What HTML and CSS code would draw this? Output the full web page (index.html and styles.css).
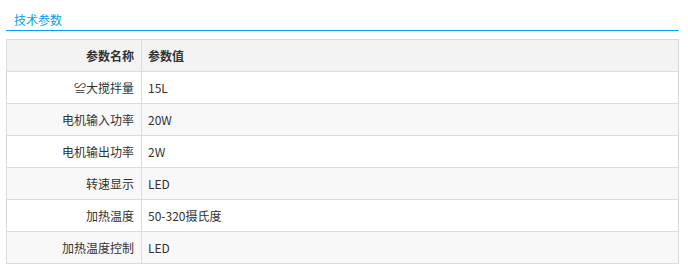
FILE: index.html
```html
<!DOCTYPE html>
<html lang="zh-CN">
<head>
<meta charset="utf-8">
<title>技术参数</title>
<link rel="stylesheet" href="styles.css">
</head>
<body>
<div class="panel">
  <div class="tab-bar"><span class="tab">技术参数</span></div>
  <table class="params">
    <tr class="head"><th class="label">参数名称</th><th class="value">参数值</th></tr>
    <tr><td class="label">≌大搅拌量</td><td class="value">15L</td></tr>
    <tr class="alt"><td class="label">电机输入功率</td><td class="value">20W</td></tr>
    <tr><td class="label">电机输出功率</td><td class="value">2W</td></tr>
    <tr class="alt"><td class="label">转速显示</td><td class="value">LED</td></tr>
    <tr><td class="label">加热温度</td><td class="value">50-320摄氏度</td></tr>
    <tr class="alt"><td class="label">加热温度控制</td><td class="value">LED</td></tr>
  </table>
</div>
</body>
</html>
```
FILE: styles.css
```css
html, body {
  margin: 0;
  padding: 0;
  background: #fff;
}
body {
  font-family: "Noto Sans CJK SC", "Liberation Sans", sans-serif;
  font-size: 12px;
  color: #333;
}
.panel {
  width: 673px;
  margin-left: 6px;
  padding-top: 11px;
}
.tab-bar {
  border-bottom: 1px solid #0aa0f2;
  height: 19px;
  padding-left: 8px;
}
.tab {
  display: inline-block;
  color: #0a9cf0;
  line-height: 17px;
}
.params {
  margin-top: 8px;
  width: 673px;
  border-collapse: collapse;
  border: 1px solid #dcdcdc;
}
.params th, .params td {
  border: 1px solid #dcdcdc;
  height: 31px;
  padding: 0;
  font-size: 12px;
  vertical-align: middle;
}
.params .label {
  width: 127px;
  text-align: right;
  padding-right: 7px;
}
.params .value {
  text-align: left;
  padding-left: 6px;
}
.params th {
  font-weight: bold;
  color: #333;
}
.head {
  background: #f3f3f3;
}
.alt {
  background: #f8f8f8;
}
```
